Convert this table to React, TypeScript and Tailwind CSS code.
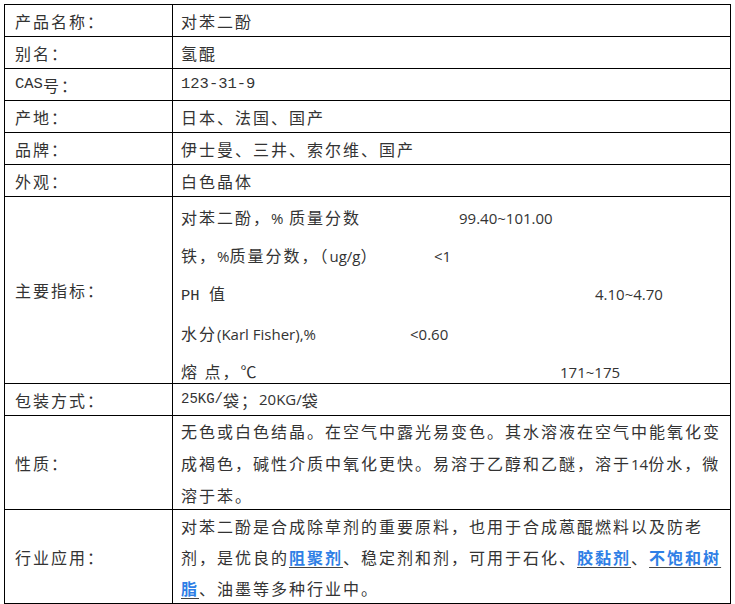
import React from "react";

const L = "font-['Open_Sans','Noto_Sans_CJK_SC',sans-serif] tracking-normal text-[15px]";
const M = "font-['Liberation_Mono','Noto_Sans_CJK_SC',monospace] tracking-normal text-[15.5px]";

function Link({ children }: { children: React.ReactNode }) {
  return (
    <span className="text-[#2f7fe6] font-bold underline decoration-[#444] underline-offset-[3px]">
      {children}
    </span>
  );
}

export default function App() {
  const labelCls = "border-r border-b border-black flex items-center pl-[10px]";
  const valueCls = "border-r border-b border-black flex items-center pl-[8px]";
  return (
    <div className="bg-white w-[735px] h-[604px] pt-[4px] pl-[4px] font-['Noto_Sans_CJK_SC',sans-serif] text-[16px] tracking-[2px] text-[#333] overflow-hidden">
      <div className="grid grid-cols-[168px_558px] w-[727px] border-l border-t border-black">
        <div className={`${labelCls} h-[32px]`}>产品名称：</div>
        <div className={`${valueCls} h-[32px]`}>对苯二酚</div>

        <div className={`${labelCls} h-[32px]`}>别名：</div>
        <div className={`${valueCls} h-[32px]`}>氢醌</div>

        <div className={`${labelCls} h-[32px]`}>
          <span className={M}>CAS</span>号：
        </div>
        <div className={`${valueCls} h-[32px]`}>
          <span className={M}>123-31-9</span>
        </div>

        <div className={`${labelCls} h-[32px]`}>产地：</div>
        <div className={`${valueCls} h-[32px]`}>日本、法国、国产</div>

        <div className={`${labelCls} h-[32px]`}>品牌：</div>
        <div className={`${valueCls} h-[32px]`}>伊士曼、三井、索尔维、国产</div>

        <div className={`${labelCls} h-[32px]`}>外观：</div>
        <div className={`${valueCls} h-[32px]`}>白色晶体</div>

        <div className={`${labelCls} h-[187px]`}>主要指标：</div>
        <div className="border-r border-b border-black h-[187px] pl-[8px] pt-[2px] leading-[37px]">
          <div>
            <span className="inline-block w-[278px]">
              对苯二酚，<span className={L}>%</span> 质量分数
            </span>
            <span className={L}>99.40~101.00</span>
          </div>
          <div>
            <span className="inline-block w-[253px]">
              铁，<span className={L}>%</span>质量分数，（<span className={L}>ug/g</span>）
            </span>
            <span className={L}>&lt;1</span>
          </div>
          <div>
            <span className="inline-block w-[414px]">
              <span className={M}>PH </span>值
            </span>
            <span className={L}>4.10~4.70</span>
          </div>
          <div>
            <span className="inline-block w-[229px]">
              水分<span className={L}>(Karl Fisher),%</span>
            </span>
            <span className={L}>&lt;0.60</span>
          </div>
          <div>
            <span className="inline-block w-[379px]">熔 点，℃</span>
            <span className={L}>171~175</span>
          </div>
        </div>

        <div className={`${labelCls} h-[32px]`}>包装方式：</div>
        <div className={`${valueCls} h-[32px]`}>
          <span className="font-['Liberation_Mono','Noto_Sans_CJK_SC',monospace] tracking-normal text-[14px]">25KG/</span>袋；<span className={L}>20KG/</span>袋
        </div>

        <div className={`${labelCls} h-[94px]`}>性质：</div>
        <div className="border-r border-b border-black h-[94px] pl-[8px] leading-[31.5px]">
          无色或白色结晶。在空气中露光易变色。其水溶液在空气中能氧化变
          <br />
          成褐色，碱性介质中氧化更快。易溶于乙醇和乙醚，溶于<span className={L}>14</span>份水，微
          <br />
          溶于苯。
        </div>

        <div className={`${labelCls} h-[94px]`}>行业应用：</div>
        <div className="border-r border-b border-black h-[94px] pl-[8px] pt-[1px] leading-[31px]">
          对苯二酚是合成除草剂的重要原料，也用于合成蒽醌燃料以及防老
          <br />
          剂，是优良的<Link>阻聚剂</Link>、稳定剂和剂，可用于石化、<Link>胶黏剂</Link>、<Link>不饱和树</Link>
          <br />
          <Link>脂</Link>、油墨等多种行业中。
        </div>
      </div>
    </div>
  );
}
